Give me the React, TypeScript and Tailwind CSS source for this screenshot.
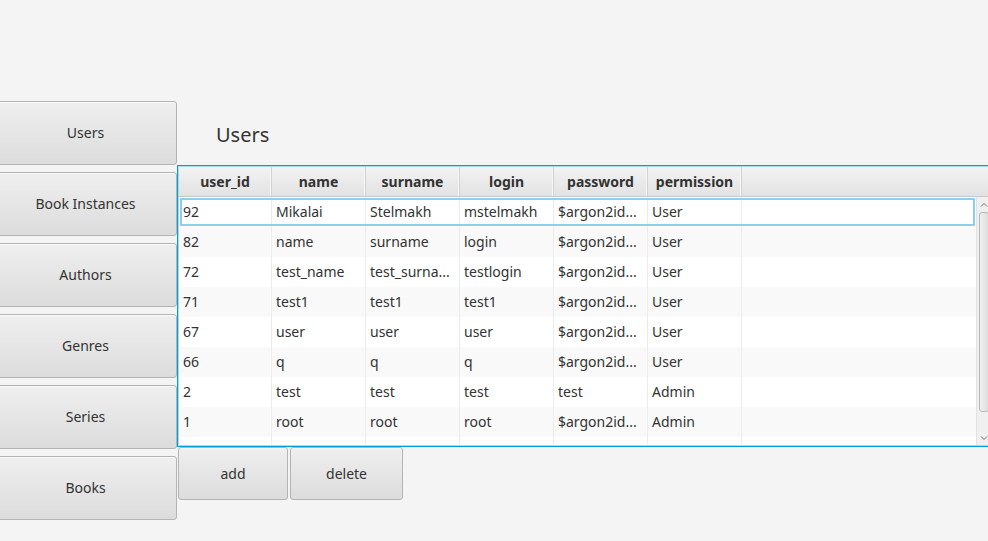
import React from "react";

const navItems = ["Users", "Book Instances", "Authors", "Genres", "Series", "Books"];
const cols = [
  { key: "user_id", w: 93 },
  { key: "name", w: 94 },
  { key: "surname", w: 94 },
  { key: "login", w: 94 },
  { key: "password", w: 94 },
  { key: "permission", w: 94 },
];
const rows: string[][] = [
  ["92", "Mikalai", "Stelmakh", "mstelmakh", "$argon2id...", "User"],
  ["82", "name", "surname", "login", "$argon2id...", "User"],
  ["72", "test_name", "test_surna...", "testlogin", "$argon2id...", "User"],
  ["71", "test1", "test1", "test1", "$argon2id...", "User"],
  ["67", "user", "user", "user", "$argon2id...", "User"],
  ["66", "q", "q", "q", "$argon2id...", "User"],
  ["2", "test", "test", "test", "test", "Admin"],
  ["1", "root", "root", "root", "$argon2id...", "Admin"],
  ["", "", "", "", "$argon2id...", ""],
];

const btn =
  "flex items-center justify-center rounded-[3px] border border-[#b4b4b4] bg-gradient-to-b from-[#efefef] to-[#dcdcdc] shadow-[inset_0_1px_0_#f8f8f8] text-[#333] text-[14px]";

export default function App() {
  return (
    <div
      className="w-[988px] h-[541px] bg-[#f4f4f4] overflow-hidden flex pt-[101px]"
      style={{ fontFamily: '"Noto Sans", "Open Sans", sans-serif' }}
    >
      <div className="flex flex-col gap-[7px] ml-[-6px] w-[183px] shrink-0">
        {navItems.map((n) => (
          <div key={n} className={btn + " h-[64px] pb-[1px]"}>
            {n}
          </div>
        ))}
      </div>
      <div className="flex flex-col shrink-0">
        <div className="h-[64px] flex items-center pl-[39px] text-[20px] text-[#333] pt-[4px]">Users</div>
        <div className="w-[815px] h-[282px] border border-[#039ed3] bg-white">
          <div className="w-full h-full border border-[#a6dcf1] flex flex-col overflow-hidden">
            <div className="flex h-[30px] shrink-0 bg-gradient-to-b from-[#f3f3f3] to-[#e2e2e2] border-b border-[#c8c8c8]">
              {cols.map((c) => (
                <div
                  key={c.key}
                  style={{ width: c.w }}
                  className="shrink-0 flex items-center justify-center font-bold text-[14px] text-[#333] border-r border-[#d2d2d2] shadow-[inset_-1px_0_0_#f7f7f7]"
                >
                  {c.key}
                </div>
              ))}
              <div className="flex-1" />
            </div>
            <div className="flex flex-1 min-h-0">
              <div className="flex-1 flex flex-col overflow-hidden">
                {rows.map((r, i) => (
                  <div
                    key={i}
                    className={
                      "relative flex h-[30px] shrink-0 " + (i % 2 === 1 ? "bg-[#f9f9f9]" : "bg-white")
                    }
                  >
                    {r.map((v, j) => (
                      <div
                        key={j}
                        style={{ width: cols[j].w }}
                        className="shrink-0 flex items-center pl-[4px] pb-[2px] text-[14px] text-[#333] border-r border-[#ececec] whitespace-nowrap overflow-hidden"
                      >
                        {v}
                      </div>
                    ))}
                    <div className="flex-1" />
                    {i === 0 && (
                      <div className="absolute left-[1px] right-[1px] top-[1px] bottom-[1px] border-2 border-[#8ccfea]" />
                    )}
                  </div>
                ))}
              </div>
              <div className="w-[14px] shrink-0 bg-[#f0f0f0] border-l border-[#e2e2e2] flex flex-col items-center">
                <svg width="10" height="10" viewBox="0 0 10 10" className="mt-[3px]">
                  <path d="M2 6.5 L5 3.5 L8 6.5" stroke="#707070" strokeWidth="1" fill="none" />
                </svg>
                <div className="w-[10px] h-[200px] mt-[2px] rounded-[3px] border border-[#b8b8b8] bg-gradient-to-r from-[#f0f0f0] to-[#dedede]" />
                <div className="flex-1" />
                <svg width="10" height="10" viewBox="0 0 10 10" className="mb-[2px]">
                  <path d="M2 3.5 L5 6.5 L8 3.5" stroke="#707070" strokeWidth="1" fill="none" />
                </svg>
              </div>
            </div>
          </div>
        </div>
        <div className="flex gap-[2px] pl-[1px]">
          <div className={btn + " w-[110px] h-[53px]"}>add</div>
          <div className={btn + " w-[113px] h-[53px]"}>delete</div>
        </div>
      </div>
    </div>
  );
}
